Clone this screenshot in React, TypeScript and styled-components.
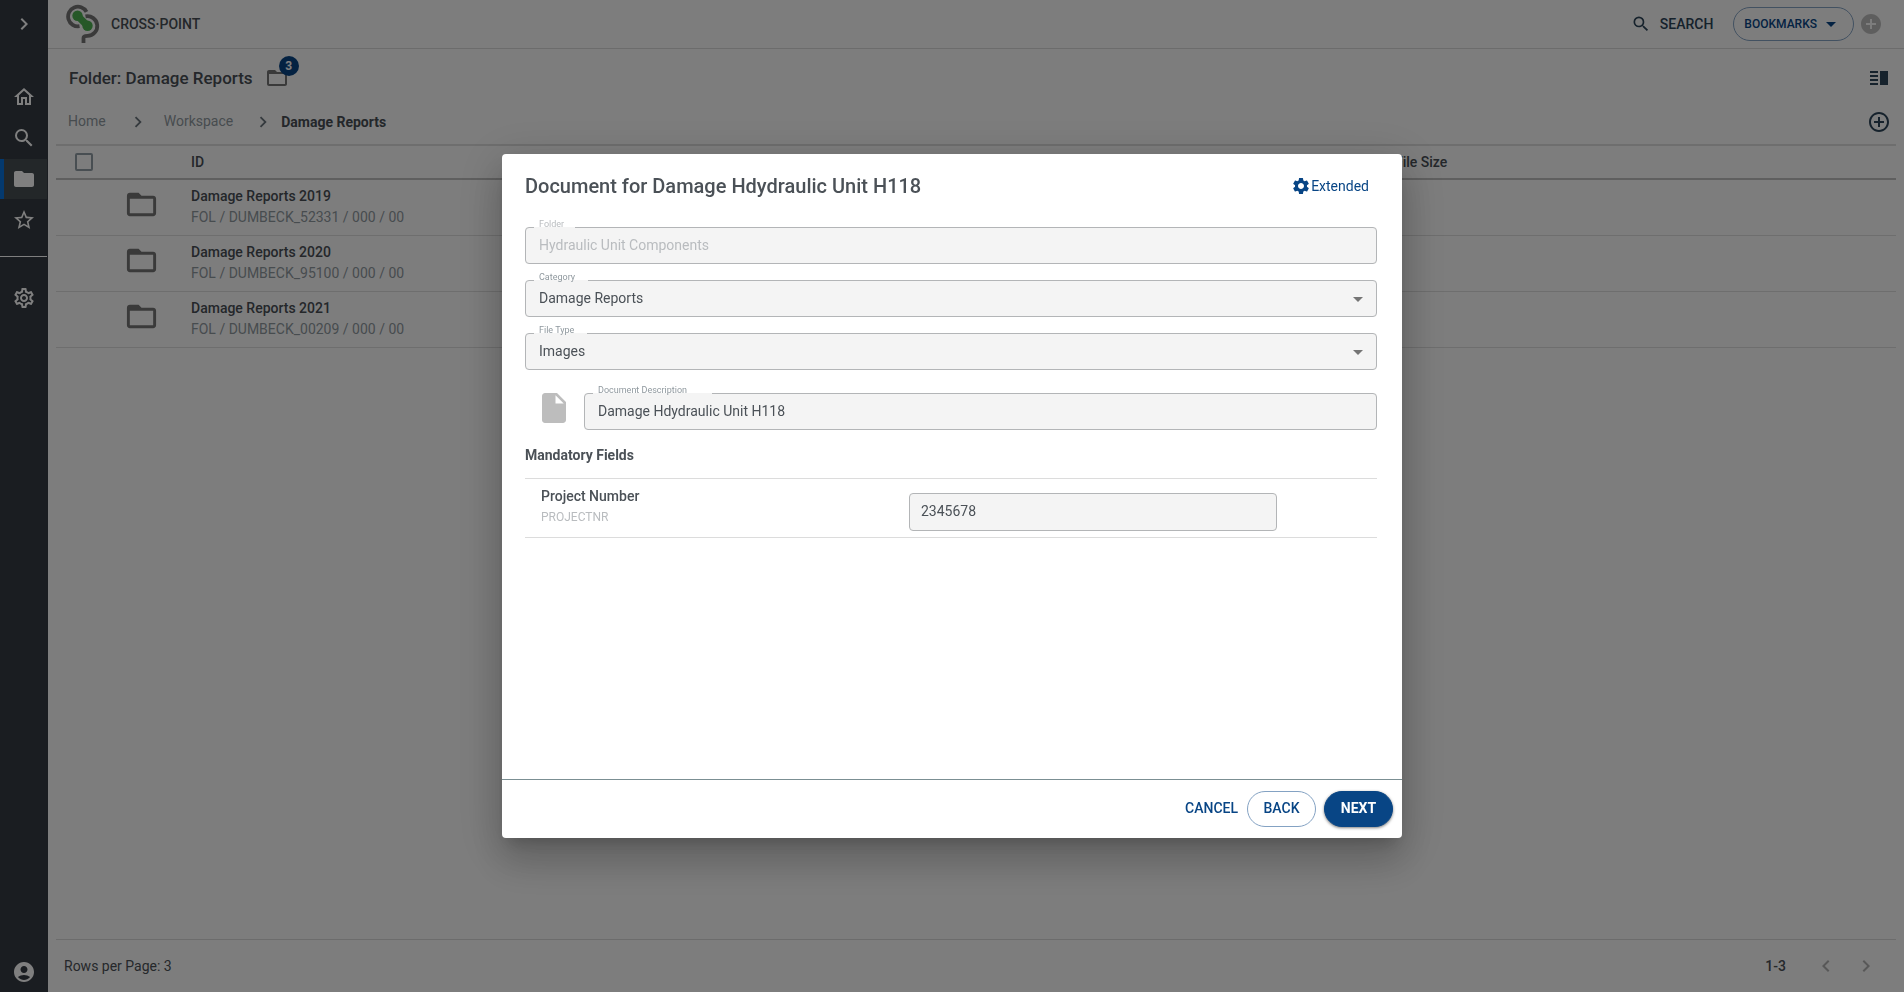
import React from "react";
import styled, { createGlobalStyle, css } from "styled-components";
import {
  MdAccountCircle,
  MdAddCircle,
  MdAddCircleOutline,
  MdArrowDropDown,
  MdChevronLeft,
  MdChevronRight,
  MdFolder,
  MdFolderOpen,
  MdInsertDriveFile,
  MdOutlineHome,
  MdOutlineSettings,
  MdSearch,
  MdSettings,
  MdStarBorder,
  MdVerticalSplit,
} from "react-icons/md";

const c = {
  rail: "#343a42",
  railActive: "#464e53",
  railAccent: "#0873dd",
  page: "#fbfbfb",
  ink: "#4b5157",
  heading: "#484e55",
  muted: "#8f989e",
  faint: "#b9bcbf",
  blue: "#084585",
  navy: "#2c4458",
  fill: "#f4f4f4",
  outline: "#b3b5b7",
  line: "#dcdcdc",
};

const GlobalStyle = createGlobalStyle`
  *, *::before, *::after { box-sizing: border-box; }
  body {
    margin: 0;
    font: 400 14px/20px Roboto, "Liberation Sans", sans-serif;
    color: ${c.ink};
    background: ${c.page};
  }
  button, input, select { font: inherit; color: inherit; }
  svg { display: block; flex: none; }
`;

const Shell = styled.div`
  display: flex;
  min-height: 100vh;
`;

const Rail = styled.nav`
  display: flex;
  flex-direction: column;
  width: 48px;
  flex: none;
  background: ${c.rail};
  border-right: 1px solid ${c.rail};
`;

const RailGroup = styled.div<{ $top?: number; $bottom?: number }>`
  display: flex;
  flex-direction: column;
  gap: 1px;
  padding-top: ${(p) => p.$top ?? 0}px;
  padding-bottom: ${(p) => p.$bottom ?? 0}px;
`;

const RailButton = styled.button<{ $active?: boolean }>`
  display: flex;
  align-items: center;
  justify-content: center;
  height: 40px;
  padding: 0 4px 0 0;
  border: 0;
  border-left: 4px solid ${(p) => (p.$active ? c.railAccent : "transparent")};
  background: ${(p) => (p.$active ? c.railActive : "transparent")};
  color: #fff;
`;

const RailDivider = styled.hr`
  width: 100%;
  margin: 16px 0 21px;
  border: 0;
  border-top: 1px solid #fff;
`;

const Spacer = styled.div`
  flex: 1;
`;

const Main = styled.div`
  display: flex;
  flex-direction: column;
  flex: 1;
  min-width: 0;
`;

const TopBar = styled.header`
  display: flex;
  align-items: center;
  height: 49px;
  padding: 0 21px 0 18px;
  border-bottom: 1px solid #d8d8d8;
`;

const Brand = styled.a`
  display: flex;
  align-items: center;
  gap: 11px;
  color: ${c.heading};
  font-weight: 500;
  text-decoration: none;
`;

const TopActions = styled.div`
  display: flex;
  align-items: center;
  margin-left: auto;
`;

const SearchButton = styled.button`
  display: flex;
  align-items: center;
  gap: 9px;
  margin-right: 20px;
  padding: 0;
  border: 0;
  background: none;
  color: ${c.navy};
  font-weight: 500;
`;

const iconButton = css`
  display: flex;
  padding: 0;
  border: 0;
  background: none;
`;

const IconButton = styled.button<{ $tone?: string }>`
  ${iconButton}
  color: ${(p) => p.$tone ?? c.navy};
`;

const PillButton = styled.button<{ $primary?: boolean; $small?: boolean }>`
  display: flex;
  align-items: center;
  justify-content: center;
  gap: 2px;
  min-width: 69px;
  height: ${(p) => (p.$small ? 34 : 36)}px;
  padding: ${(p) => (p.$small ? "0 10px" : "0 15px 2px")};
  border: 1px solid ${(p) => (p.$primary ? c.blue : "#84a2c3")};
  border-radius: 18px;
  background: ${(p) => (p.$primary ? c.blue : "transparent")};
  color: ${(p) => (p.$primary ? "#fff" : c.blue)};
  font-size: ${(p) => (p.$small ? 12 : 14)}px;
  font-weight: ${(p) => (p.$primary ? 700 : 500)};
  box-shadow: ${(p) => (p.$primary ? "0 1px 3px rgba(0, 0, 0, 0.5)" : "none")};
`;

const AddBookmark = styled(IconButton)`
  margin-left: 5px;
`;

const TitleRow = styled.div`
  display: flex;
  align-items: center;
  gap: 12px;
  height: 58px;
  padding: 0 13px 0 21px;
`;

const PageTitle = styled.h1`
  margin: 0;
  color: ${c.heading};
  font-size: 17px;
  line-height: 24px;
  font-weight: 500;
`;

const BadgeHolder = styled.div`
  position: relative;
  color: #747474;
`;

const Badge = styled.span`
  position: absolute;
  top: -10px;
  left: 14px;
  width: 20px;
  height: 20px;
  border-radius: 10px;
  background: ${c.blue};
  color: #fff;
  font-size: 12px;
  line-height: 20px;
  font-weight: 700;
  text-align: center;
`;

const CrumbRow = styled.div`
  display: flex;
  align-items: center;
  height: 37px;
  padding: 0 13px 8px 20px;
`;

const Crumbs = styled.ol`
  display: flex;
  align-items: center;
  margin: 0;
  padding: 0;
  list-style: none;
`;

const Crumb = styled.li`
  display: flex;
  align-items: center;
`;

const CrumbLink = styled.a`
  padding-bottom: 2px;
  color: ${c.muted};
  text-decoration: none;
`;

const CrumbCurrent = styled.span`
  color: ${c.heading};
  font-weight: 700;
`;

const CrumbArrow = styled.span<{ $before: number; $after: number }>`
  margin: 0 ${(p) => p.$after}px 0 ${(p) => p.$before}px;
  color: #6b757c;
`;

const Pane = styled.main`
  flex: 1;
  padding: 0 8px;
`;

const Table = styled.table`
  width: 100%;
  table-layout: fixed;
  border-collapse: separate;
  border-spacing: 0;
  text-align: left;
`;

const HeadCell = styled.th<{ $width?: number; $pad?: number }>`
  width: ${(p) => (p.$width ? `${p.$width}px` : "auto")};
  height: 36px;
  padding: 0 0 0 ${(p) => p.$pad ?? 0}px;
  border-top: 2px solid ${c.line};
  border-bottom: 2px solid #bebebe;
  color: ${c.heading};
  font-weight: 500;
`;

const Cell = styled.td<{ $icon?: boolean }>`
  height: 56px;
  padding: ${(p) => (p.$icon ? "0 0 6px 12px" : "0 0 2px")};
  border-bottom: 1px solid ${c.line};
  color: #747474;
`;

const Checkbox = styled.input`
  display: block;
  appearance: none;
  width: 18px;
  height: 18px;
  margin: 0;
  border: 2px solid #909ca4;
  border-radius: 2px;
`;

const RowTitle = styled.div`
  color: ${c.heading};
  font-weight: 500;
`;

const RowSub = styled.div`
  margin-top: 1px;
  color: ${c.muted};
`;

const Pager = styled.footer`
  display: flex;
  align-items: center;
  height: 53px;
  margin: 0 8px;
  padding: 0 18px 0 8px;
  border-top: 1px solid #d8d8d8;
`;

const PagerRange = styled.span`
  margin-left: auto;
  padding-right: 28px;
  font-weight: 500;
`;

const PagerButtons = styled.div`
  display: flex;
  gap: 16px;
`;

const Backdrop = styled.div`
  position: fixed;
  inset: 0;
  display: flex;
  align-items: center;
  justify-content: center;
  padding: 32px;
  background: rgba(0, 0, 0, 0.5);
`;

const Dialog = styled.form`
  display: flex;
  flex-direction: column;
  width: 100%;
  max-width: 900px;
  min-height: 684px;
  border-radius: 4px;
  background: #fff;
  box-shadow: 0 11px 15px -7px rgba(0, 0, 0, 0.2),
    0 24px 38px 3px rgba(0, 0, 0, 0.14), 0 9px 46px 8px rgba(0, 0, 0, 0.12);
`;

const DialogHead = styled.div`
  display: flex;
  align-items: center;
  justify-content: space-between;
  height: 64px;
  padding: 0 33px 0 23px;
`;

const DialogTitle = styled.h2`
  margin: 0;
  font-size: 20px;
  line-height: 28px;
  font-weight: 500;
`;

const ExtendedButton = styled.button`
  ${iconButton}
  align-items: center;
  color: ${c.blue};
`;

const DialogBody = styled.div`
  flex: 1;
  padding: 9px 25px 24px 23px;
`;

const Fields = styled.div`
  display: flex;
  flex-direction: column;
  gap: 16px;
`;

const DescriptionRow = styled.div`
  display: flex;
  align-items: flex-end;
  margin-top: 20px;
`;

const FileMark = styled.div`
  width: 59px;
  flex: none;
  padding: 0 11px 4px;
  color: #bdbdbd;
`;

const FieldBox = styled.div<{ $disabled?: boolean }>`
  position: relative;
  flex: 1;
  color: ${(p) => (p.$disabled ? c.faint : c.ink)};
`;

const FieldLabel = styled.label<{ $disabled?: boolean }>`
  position: absolute;
  z-index: 1;
  top: -8px;
  left: 14px;
  color: ${(p) => (p.$disabled ? c.faint : c.muted)};
  font-size: 9px;
  line-height: 10px;
`;

const Notch = styled.fieldset`
  position: absolute;
  inset: -5px 0 0;
  min-width: 0;
  margin: 0;
  padding: 0 8px;
  border: 1px solid ${c.outline};
  border-radius: 4px;
  pointer-events: none;

  legend {
    height: 11px;
    padding: 0 5px;
    font-size: 11px;
    line-height: 11px;
    visibility: hidden;
  }
`;

const control = css`
  display: block;
  width: 100%;
  height: 37px;
  margin: 0;
  padding: 0 14px 2px;
  border: 0;
  border-radius: 4px;
  outline: 0;
  background: ${c.fill};
`;

const TextInput = styled.input`
  ${control}
  &:disabled {
    color: ${c.faint};
  }
`;

const Select = styled.select`
  ${control}
  appearance: none;
`;

const SelectArrow = styled.span`
  position: absolute;
  top: 7px;
  right: 7px;
  color: #757575;
  pointer-events: none;
`;

const SectionTitle = styled.h3`
  margin: 15px 0 13px;
  font-size: 14px;
  line-height: 20px;
  font-weight: 700;
`;

const AttributeRow = styled.div`
  display: flex;
  height: 60px;
  padding: 0 100px 0 16px;
  border: solid ${c.line};
  border-width: 1px 0;
`;

const AttributeName = styled.div`
  flex: 1;
  padding-top: 7px;
`;

const AttributeLabel = styled.label`
  display: block;
  font-weight: 500;
`;

const AttributeCode = styled.div`
  margin-top: 1px;
  color: ${c.faint};
  font-size: 12px;
`;

const AttributeInput = styled.input`
  width: 50%;
  height: 38px;
  margin-top: 14px;
  padding: 0 11px 2px;
  border: 1px solid ${c.outline};
  border-radius: 4px;
  background: ${c.fill};
`;

const DialogFoot = styled.div`
  display: flex;
  align-items: center;
  justify-content: flex-end;
  gap: 8px;
  height: 59px;
  padding: 0 9px 0 0;
  border-top: 1px solid #7b8f93;
`;

const TextButton = styled.button`
  padding: 0 1px 2px 0;
  border: 0;
  background: none;
  color: ${c.blue};
  font-weight: 500;
`;

function Logo() {
  return (
    <svg width="34" height="40" viewBox="0 0 34 40" aria-hidden="true">
      <g fill="none" stroke="#747474" strokeWidth="3.800">
        <path d="M20.500 7.800A9.800 9.800 0 1 0 13.500 22.200" />
        <path d="M19.500 12.400A9.800 9.800 0 1 1 21.500 31.800Q17.500 31.800 17.500 34V39" />
      </g>
      <circle cx="11.500" cy="11.700" r="5.200" fill="#4cb050" />
      <circle cx="21.500" cy="21.700" r="5.200" fill="#4cb050" />
      <path d="M12.500 12.700L20.500 20.700" stroke="#4cb050" strokeWidth="7" />
    </svg>
  );
}

type FieldProps = {
  id: string;
  label: string;
  value: string;
  disabled?: boolean;
  select?: boolean;
};

function Field({ id, label, value, disabled, select }: FieldProps) {
  return (
    <FieldBox $disabled={disabled}>
      <FieldLabel htmlFor={id} $disabled={disabled}>
        {label}
      </FieldLabel>
      {select ? (
        <>
          <Select id={id} defaultValue={value}>
            <option>{value}</option>
          </Select>
          <SelectArrow>
            <MdArrowDropDown size={24} />
          </SelectArrow>
        </>
      ) : (
        <TextInput id={id} defaultValue={value} disabled={disabled} />
      )}
      <Notch aria-hidden="true">
        <legend>{label}</legend>
      </Notch>
    </FieldBox>
  );
}

const folders = [
  { name: "Damage Reports 2019", code: "FOL / DUMBECK_52331 / 000 / 00" },
  { name: "Damage Reports 2020", code: "FOL / DUMBECK_95100 / 000 / 00" },
  { name: "Damage Reports 2021", code: "FOL / DUMBECK_00209 / 000 / 00" },
];

export default function App() {
  return (
    <>
      <GlobalStyle />
      <Shell>
        <Rail aria-label="Main">
          <RailGroup $top={4} $bottom={33}>
            <RailButton aria-label="Expand menu"><MdChevronRight size={24} /></RailButton>
          </RailGroup>
          <RailGroup>
            <RailButton aria-label="Home"><MdOutlineHome size={24} /></RailButton>
            <RailButton aria-label="Search"><MdSearch size={24} /></RailButton>
            <RailButton aria-label="Workspace" $active><MdFolder size={24} /></RailButton>
            <RailButton aria-label="Favourites"><MdStarBorder size={24} /></RailButton>
          </RailGroup>
          <RailDivider />
          <RailGroup>
            <RailButton aria-label="Settings"><MdOutlineSettings size={24} /></RailButton>
          </RailGroup>
          <Spacer />
          <RailButton aria-label="Account"><MdAccountCircle size={24} /></RailButton>
        </Rail>

        <Main>
          <TopBar>
            <Brand href="#">
              <Logo />
              CROSS·POINT
            </Brand>
            <TopActions>
              <SearchButton>
                <MdSearch size={20} />
                SEARCH
              </SearchButton>
              <PillButton $small>
                BOOKMARKS
                <MdArrowDropDown size={24} />
              </PillButton>
              <AddBookmark aria-label="Add bookmark" $tone="#bdbdbd">
                <MdAddCircle size={24} />
              </AddBookmark>
            </TopActions>
          </TopBar>

          <TitleRow>
            <PageTitle>Folder: Damage Reports</PageTitle>
            <BadgeHolder>
              <MdFolderOpen size={24} />
              <Badge>3</Badge>
            </BadgeHolder>
            <Spacer />
            <IconButton aria-label="Split view"><MdVerticalSplit size={24} /></IconButton>
          </TitleRow>

          <CrumbRow>
            <Crumbs>
              <Crumb>
                <CrumbLink href="#">Home</CrumbLink>
                <CrumbArrow $before={21} $after={15}><MdChevronRight size={22} /></CrumbArrow>
              </Crumb>
              <Crumb>
                <CrumbLink href="#">Workspace</CrumbLink>
                <CrumbArrow $before={19} $after={7}><MdChevronRight size={22} /></CrumbArrow>
              </Crumb>
              <Crumb>
                <CrumbCurrent aria-current="page">Damage Reports</CrumbCurrent>
              </Crumb>
            </Crumbs>
            <Spacer />
            <IconButton aria-label="Add"><MdAddCircleOutline size={24} /></IconButton>
          </CrumbRow>

          <Pane>
            <Table>
              <thead>
                <tr>
                  <HeadCell $width={56} $pad={19}>
                    <Checkbox type="checkbox" aria-label="Select all" />
                  </HeadCell>
                  <HeadCell $width={79} />
                  <HeadCell>ID</HeadCell>
                  <HeadCell $width={501}>File Size</HeadCell>
                </tr>
              </thead>
              <tbody>
                {folders.map((f) => (
                  <tr key={f.name}>
                    <Cell />
                    <Cell $icon><MdFolderOpen size={35} /></Cell>
                    <Cell>
                      <RowTitle>{f.name}</RowTitle>
                      <RowSub>{f.code}</RowSub>
                    </Cell>
                    <Cell />
                  </tr>
                ))}
              </tbody>
            </Table>
          </Pane>

          <Pager>
            <span>Rows per Page: 3</span>
            <PagerRange>1-3</PagerRange>
            <PagerButtons>
              <IconButton aria-label="Previous page" $tone="#b0b0b0"><MdChevronLeft size={24} /></IconButton>
              <IconButton aria-label="Next page" $tone="#b0b0b0"><MdChevronRight size={24} /></IconButton>
            </PagerButtons>
          </Pager>
        </Main>
      </Shell>

      <Backdrop>
        <Dialog role="dialog" aria-modal="true" aria-labelledby="dialog-title">
          <DialogHead>
            <DialogTitle id="dialog-title">Document for Damage Hdydraulic Unit H118</DialogTitle>
            <ExtendedButton type="button">
              <MdSettings size={20} />
              Extended
            </ExtendedButton>
          </DialogHead>
          <DialogBody>
            <Fields>
              <Field id="folder" label="Folder" value="Hydraulic Unit Components" disabled />
              <Field id="category" label="Category" value="Damage Reports" select />
              <Field id="file-type" label="File Type" value="Images" select />
            </Fields>
            <DescriptionRow>
              <FileMark><MdInsertDriveFile size={36} /></FileMark>
              <Field id="description" label="Document Description" value="Damage Hdydraulic Unit H118" />
            </DescriptionRow>
            <SectionTitle>Mandatory Fields</SectionTitle>
            <AttributeRow>
              <AttributeName>
                <AttributeLabel htmlFor="project-number">Project Number</AttributeLabel>
                <AttributeCode>PROJECTNR</AttributeCode>
              </AttributeName>
              <AttributeInput id="project-number" defaultValue="2345678" />
            </AttributeRow>
          </DialogBody>
          <DialogFoot>
            <TextButton type="button">CANCEL</TextButton>
            <PillButton type="button">BACK</PillButton>
            <PillButton type="button" $primary>NEXT</PillButton>
          </DialogFoot>
        </Dialog>
      </Backdrop>
    </>
  );
}
